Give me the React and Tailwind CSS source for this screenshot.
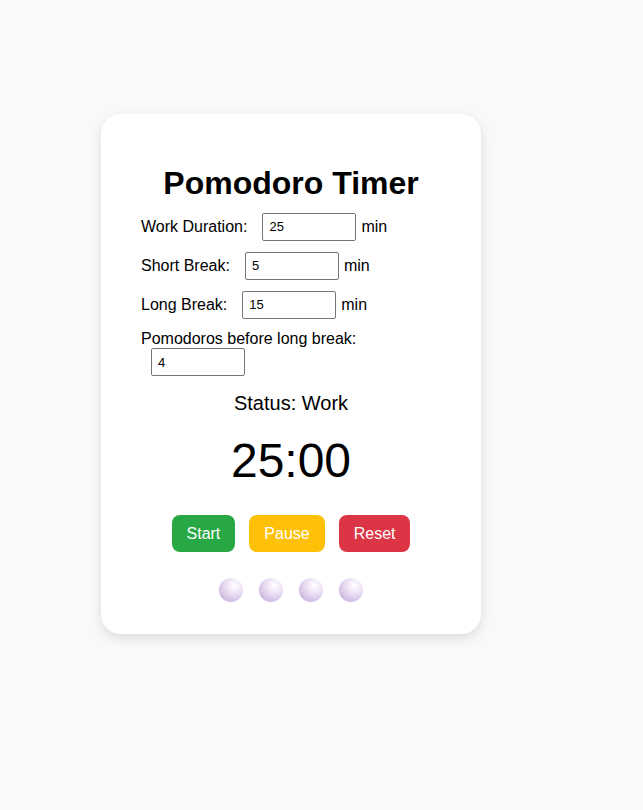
const settings = [
  { label: 'Work Duration:', value: 25 },
  { label: 'Short Break:', value: 5 },
  { label: 'Long Break:', value: 15 },
];

function NumberField({ value }) {
  return (
    <input
      type="number"
      defaultValue={value}
      className="ml-[10px] w-[94px] h-[28px] px-[6px] border border-[#767676] rounded-[2px] bg-white text-[13px] text-black outline-none [appearance:textfield]"
    />
  );
}

function Dot() {
  return (
    <span className="w-[24px] h-[24px] rounded-full bg-[radial-gradient(circle_at_65%_30%,#ffffff_0%,#ede3f5_35%,#bda0d4_100%)]" />
  );
}

export default function App() {
  return (
    <div className="min-h-[810px] bg-[#f8f9fa] pt-[114px] pl-[101px] font-['Liberation_Sans',Arial,sans-serif] text-black">
      <div className="w-[380px] h-[520px] bg-white rounded-[20px] shadow-[0_4px_12px_rgba(0,0,0,0.12)] px-[40px] pt-[30px]">
        <h1 className="mt-[21px] mb-[10px] text-[32px] font-bold text-center leading-[37px]">Pomodoro Timer</h1>

        {settings.map((s, i) => (
          <div
            key={s.label}
            className={i === settings.length - 1 ? 'mb-[11px] h-[29px] flex items-center text-[16px]' : 'mb-[10px] h-[29px] flex items-center text-[16px]'}
          >
            <span>{s.label}</span>
            <span className="w-[5px]" />
            <NumberField value={s.value} />
            <span className="ml-[5px]">min</span>
          </div>
        ))}

        <div className="text-[16px] leading-[18px]">Pomodoros before long break:</div>
        <div className="h-[29px]">
          <NumberField value={4} />
        </div>

        <div className="mt-[15px] text-[20px] leading-[23px] text-center">Status: Work</div>
        <div className="mt-[18px] text-[48px] leading-[55px] text-center">25:00</div>

        <div className="mt-[27px] flex justify-center gap-[14px] text-[16px] text-white">
          <button className="h-[37px] px-[15px] rounded-[8px] bg-[#28a745]">Start</button>
          <button className="h-[37px] px-[15px] rounded-[8px] bg-[#ffc107]">Pause</button>
          <button className="h-[37px] px-[15px] rounded-[8px] bg-[#dc3545]">Reset</button>
        </div>

        <div className="mt-[26px] flex justify-center gap-[16px]">
          <Dot />
          <Dot />
          <Dot />
          <Dot />
        </div>
      </div>
    </div>
  );
}
